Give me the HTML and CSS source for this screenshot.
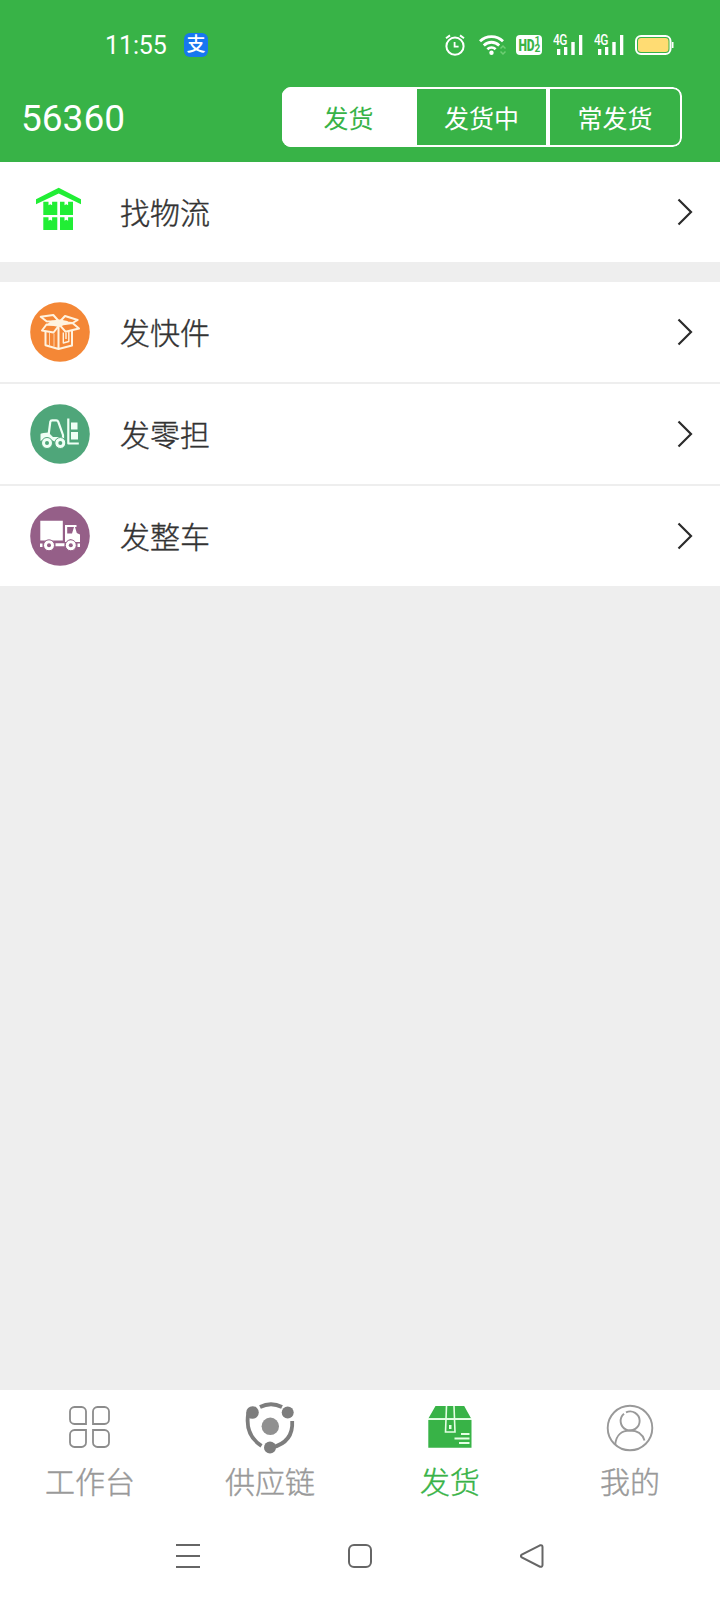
FILE: index.html
```html
<!DOCTYPE html>
<html lang="zh-CN">
<head>
  <meta charset="UTF-8" />
  <meta name="viewport" content="width=device-width, initial-scale=1.0"/>
  <title>56360</title>
  <link rel="stylesheet" href="styles.css">
</head>

<body>
  <header>
    <div class="status-bar">
      <span class="hora">11:55</span>
      <span class="alipay">支</span>
      <div class="status-icons">
        <svg class="alarm" width="20" height="22" viewBox="0 0 20 22" fill="none" stroke="#fff" stroke-width="2">
          <circle cx="10" cy="12.2" r="8.6"/>
          <path d="M9.6 8v4.6h4" stroke-width="1.8"/>
          <path d="M1 4.2l4-2.8M19 4.2l-4-2.8"/>
        </svg>
        <svg class="wifi" width="27" height="22" viewBox="0 0 27 22" fill="none" stroke="#fff" stroke-width="2.8">
          <path d="M1 7.2a16.5 16.5 0 0 1 23 0"/>
          <path d="M4.8 11.4a11 11 0 0 1 15.4 0"/>
          <path d="M8.4 15.2a6 6 0 0 1 8.2 0"/>
          <circle cx="12.5" cy="18.8" r="2.2" fill="#fff" stroke="none"/>
          <path d="M21.5 14.5l2.5-2.5 2.5 2.5M21.5 17.5l2.5 2.5 2.5-2.5" stroke="#6fce74" stroke-width="1.5"/>
        </svg>
        <div class="hd"><b>HD</b><i><em>1</em><em>2</em></i></div>
        <div class="signal">
          <span>4G</span>
          <svg width="26" height="20" viewBox="0 0 26 20" fill="#fff">
            <path d="M0 14h3.3v6H0zM7 12h3.3v8H7zM14.3 7h3.4v13h-3.4zM22 0h3.3v20H22z"/>
          </svg>
        </div>
        <div class="signal">
          <span>4G</span>
          <svg width="26" height="20" viewBox="0 0 26 20" fill="#fff">
            <path d="M0 14h3.3v6H0zM7 12h3.3v8H7zM14.3 7h3.4v13h-3.4zM22 0h3.3v20H22z"/>
          </svg>
        </div>
        <svg class="battery" width="39" height="20" viewBox="0 0 39 20">
          <rect x="1" y="1" width="34.5" height="18" rx="5" fill="none" stroke="#fff" stroke-width="2"/>
          <rect x="3" y="3" width="30.5" height="14" rx="3.2" fill="#ffdc73"/>
          <path d="M36.8 7h1.7v6h-1.7z" fill="#fff"/>
        </svg>
      </div>
    </div>
    <div class="title-bar">
      <h1>56360</h1>
      <div class="segment">
        <button class="active">发货</button>
        <button>发货中</button>
        <button>常发货</button>
      </div>
    </div>
  </header>

  <main>
    <a class="row">
      <svg class="row-icon" viewBox="0 0 60 60" fill="#21ee35">
        <path d="M28.7 5.7L51 17.3v4.9L28.7 11.4 6 22.2v-4.9z"/>
        <path d="M13.3 19.7h5.2v3.6l1.8-1 1.8 1v-3.6h5.2v13.3h-14zM30 19.7h4.500v3.600l1.800-1 1.800 1v-3.600h4.900v13.300H30z"/>
        <path d="M13.300 35.200h5.200v3.600l1.800-1 1.800 1v-3.600h5.200V48h-14zM30 35.200h4.500v3.600l1.800-1 1.800 1v-3.600h4.900V48H30z"/>
      </svg>
      <span>找物流</span>
      <svg class="arrow" viewBox="0 0 16 28"><path d="M1.5 1.5L14 14 1.5 26.5"/></svg>
    </a>

    <div class="group">
      <a class="row">
        <svg class="row-icon" viewBox="0 0 60 60" fill="none" stroke="#fff3df" stroke-width="2" stroke-linejoin="round">
          <circle cx="30" cy="30" r="29.8" fill="#f48736" stroke="none"/>
          <path d="M10.7 14.8l12.6-1.8 6.2 7-13-.8z"/>
          <path d="M29.5 20l5.5-6 12.7 4-5.2 3z"/>
          <path d="M16.5 22.5L12 28.5l11.5 2 6-7.7z"/>
          <path d="M29.5 22.8l13-1.8 6.5 5.5-13.5 3.2z"/>
          <path d="M22 19.5l8-1 7 1.5-8 4-10-2z" fill="#fff3df"/>
          <path d="M15.5 29.5v13.700l13 3.800 13.500-3.500V28.500M28.500 25v22"/>
          <path d="M19.500 31v12.500M24 31.500V44.500" stroke-width="1" opacity=".7"/>
          <path d="M33.300 30.500v10.500l5.500-1.500V29.500M36 31v6" stroke-width="1.400"/>
        </svg>
        <span>发快件</span>
        <svg class="arrow" viewBox="0 0 16 28"><path d="M1.5 1.5L14 14 1.5 26.5"/></svg>
      </a>
      <a class="row">
        <svg class="row-icon" viewBox="0 0 60 60" fill="none" stroke="#effff5" stroke-width="2.2" stroke-linejoin="round">
          <circle cx="30" cy="30" r="29.8" fill="#4fa67a" stroke="none"/>
          <path d="M18.7 30l1.6-12.200q.3-1.500 1.800-1.500h4.200q1.400 0 2 1.500L33 31v4"/>
          <path d="M10.500 37v-6.500q0-1.500 3-1.500l5-.5 4.500 4.500h11V39h-6l-11-5z" fill="#effff5" stroke="none"/>
          <circle cx="17" cy="39" r="5.5" fill="#effff5" stroke="#4fa67a" stroke-width="1"/>
          <circle cx="30.3" cy="39" r="5.5" fill="#effff5" stroke="#4fa67a" stroke-width="1"/>
          <circle cx="17" cy="39" r="2" fill="#4fa67a" stroke="none"/>
          <circle cx="30.3" cy="39" r="2" fill="#4fa67a" stroke="none"/>
          <path d="M38.3 14.5v25h10.5"/>
          <path d="M41 18.5h6.5v7H41zM41 28h7v7.5h-7z" fill="#effff5" stroke="none"/>
        </svg>
        <span>发零担</span>
        <svg class="arrow" viewBox="0 0 16 28"><path d="M1.5 1.5L14 14 1.5 26.5"/></svg>
      </a>
      <a class="row">
        <svg class="row-icon" viewBox="0 0 60 60" fill="#fff">
          <circle cx="30" cy="30" r="29.8" fill="#955f88"/>
          <path d="M10.3 14.7h22.5V34.5H10.3zM10 37.5h2.5v3.5H10zM25.5 37.3h9v3h-9zM47.5 37.5H50V41h-2.5z"/>
          <path d="M35 19h11.500v2H45l1.800 6 3.200 1.500V36h-5L40.500 33l-4 3H35zM37.200 21v6.500h4.800L44 21z" fill-rule="evenodd"/>
          <circle cx="19" cy="39.3" r="5.5" stroke="#955f88"/>
          <circle cx="40.8" cy="39.3" r="5.5" stroke="#955f88"/>
          <circle cx="19" cy="39.3" r="2" fill="#955f88"/>
          <circle cx="40.8" cy="39.3" r="2" fill="#955f88"/>
        </svg>
        <span>发整车</span>
        <svg class="arrow" viewBox="0 0 16 28"><path d="M1.5 1.5L14 14 1.5 26.5"/></svg>
      </a>
    </div>
  </main>

  <nav class="tab-bar">
    <a class="tab">
      <svg viewBox="0 0 60 60" fill="none" stroke="#8c8c8c" stroke-width="1.8">
        <path d="M26 27H14.5a4.5 4.5 0 0 1-4.5-4.5v-8a4.5 4.5 0 0 1 4.5-4.5h7a4.5 4.5 0 0 1 4.5 4.5z"/>
        <path d="M33 27V14.5a4.5 4.5 0 0 1 4.5-4.5h7a4.5 4.5 0 0 1 4.5 4.5v8a4.5 4.5 0 0 1-4.5 4.5z"/>
        <path d="M26 33v12.5a4.5 4.5 0 0 1-4.5 4.5h-7a4.5 4.5 0 0 1-4.5-4.5v-8a4.5 4.5 0 0 1 4.5-4.5z"/>
        <path d="M33 33h11.5a4.5 4.5 0 0 1 4.5 4.5v8a4.5 4.5 0 0 1-4.5 4.5h-7a4.5 4.5 0 0 1-4.5-4.5z"/>
      </svg>
      <span>工作台</span>
    </a>
    <a class="tab">
      <svg viewBox="0 0 60 60" fill="none" stroke="#7d7d7d" stroke-width="3.8">
        <path d="M20 10Q31 4.5 42 10"/>
        <path d="M52.2 24Q53.5 45 32 50.5"/>
        <path d="M21.5 48.8Q4.5 38 8.3 16"/>
        <g fill="#7d7d7d" stroke="none">
          <circle cx="12.5" cy="15.5" r="6.3"/>
          <circle cx="47.7" cy="15.5" r="6"/>
          <circle cx="30" cy="50.5" r="6"/>
        </g>
        <circle cx="30.3" cy="29.3" r="8.7" fill="#909090" stroke="none"/>
      </svg>
      <span>供应链</span>
    </a>
    <a class="tab active">
      <svg viewBox="0 0 60 60" fill="#38b347">
        <path d="M15.5 9h28.7l6.8 12.3H8.5zM8.3 23h43.2v27.7H8.3z"/>
        <path d="M26.5 9l-1 26h9.5l-1-26" fill="none" stroke="#e4ffe4" stroke-width="1.6"/>
        <path d="M29 28h2.5v4H29zM41 36h8.5v2H41zM34.5 40.5h15v2h-15zM39 45h10.5v2H39zM8.3 21.2h43.2V23H8.3z" fill="#e4ffe4"/>
      </svg>
      <span>发货</span>
    </a>
    <a class="tab">
      <svg viewBox="0 0 60 60" fill="none" stroke="#999" stroke-width="1.9">
        <circle cx="30" cy="31" r="22.3"/>
        <path d="M24 16.700a9.500 9.500 0 1 0 2-1.300"/>
        <path d="M15.300 47.500C16 38 22 33.500 30 33.500c7 0 12.500 3.500 14.500 10"/>
      </svg>
      <span>我的</span>
    </a>
  </nav>

  <div class="system-nav">
    <svg viewBox="0 0 24 24"><path d="M0 1h24M0 12h24M0 23h24"/></svg>
    <svg viewBox="0 0 24 24"><rect x="1" y="1" width="22" height="22" rx="5"/></svg>
    <svg viewBox="0 0 24 24"><path d="M20 1.3L1.8 10.5q-1.8 1.5 0 3L20 22.7q2.2.6 2.5-1.5V2.8q-.3-2.1-2.5-1.5z"/></svg>
  </div>
</body>
</html>
```

FILE: styles.css
```css
* {
  box-sizing: border-box;
}
body {
  margin: 0;
  height: 1600px;
  display: flex;
  flex-direction: column;
  font-family: Roboto, 'Noto Sans CJK SC', sans-serif;
  background-color: #eee;
  color: #333;
}
header {
  height: 162px;
  background-color: #38b347;
  color: white;
}
.status-bar {
  height: 87px;
  padding: 3px 46px 0 105px;
  display: flex;
  align-items: center;
}
.hora {
  width: 79px;
  font-size: 25px;
  letter-spacing: -0.1px;
}
.alipay {
  width: 24px;
  height: 24px;
  border-radius: 6px;
  background: #1777f0;
  font-size: 19px;
  font-weight: 500;
  line-height: 23px;
  text-align: center;
}
.status-icons {
  flex: 1;
  display: flex;
  align-items: center;
  justify-content: flex-end;
}
.wifi {
  margin-left: 14px;
}
.hd {
  width: 26px;
  height: 20px;
  margin-left: 10px;
  border-radius: 4px;
  background: white;
  color: #38b347;
  display: flex;
  align-items: center;
  justify-content: center;
}
.hd b {
  margin: 0 -2px;
  font-size: 16px;
  font-weight: 900;
  letter-spacing: -0.5px;
  transform: scaleX(0.75);
}
.hd i {
  display: grid;
  font-size: 10px;
  font-weight: bold;
  line-height: 8px;
}
.hd em {
  font-style: normal;
}
.signal {
  position: relative;
  width: 30px;
  height: 20px;
  margin-left: 11px;
  display: flex;
  justify-content: flex-end;
}
.hd + .signal {
  margin-left: 11px;
}
.signal span {
  position: absolute;
  left: 0;
  top: -2px;
  font-size: 14px;
  font-weight: 500;
  line-height: 14px;
  letter-spacing: -0.5px;
  transform: scaleX(0.85);
  transform-origin: left;
}
.battery {
  margin-left: 11px;
}
.title-bar {
  height: 60px;
  padding: 0 38px 0 21px;
  display: flex;
  align-items: center;
  justify-content: space-between;
}
h1 {
  margin: 0;
  padding-top: 2px;
  font-size: 37px;
  font-weight: normal;
}
.segment {
  width: 400px;
  height: 60px;
  display: grid;
  grid-template-columns: 133px 133px 134px;
  border-radius: 9px;
  overflow: hidden;
}
.segment button {
  padding: 0;
  border: 2px solid white;
  background: none;
  color: white;
  font-family: inherit;
  font-size: 25px;
}
.segment button:last-child {
  border-radius: 0 9px 9px 0;
}
.segment .active {
  background: white;
  color: #38b347;
}
main {
  flex: 1;
}
.group {
  margin-top: 20px;
}
.row {
  height: 100px;
  padding: 0 27px 0 30px;
  background: white;
  display: flex;
  align-items: center;
}
.group .row + .row {
  height: 102px;
  border-top: 2px solid #eee;
}
.row span {
  flex: 1;
  margin-left: 30px;
  padding-bottom: 2px;
  font-size: 30px;
  font-weight: 300;
  -webkit-text-stroke: 0.4px;
}
.row-icon {
  width: 60px;
  height: 60px;
}
.arrow {
  width: 16px;
  height: 28px;
  fill: none;
  stroke: #2b2b2b;
  stroke-width: 2.2;
}
.tab-bar {
  height: 122px;
  padding-top: 7px;
  background: white;
  display: grid;
  grid-template-columns: repeat(4, 1fr);
}
.tab {
  display: flex;
  flex-direction: column;
  align-items: center;
  color: #999;
  font-size: 30px;
  font-weight: 300;
  line-height: 44px;
  -webkit-text-stroke: 0.4px;
}
.tab svg {
  width: 60px;
  height: 60px;
  margin-bottom: 4px;
}
.tab.active {
  color: #38b347;
}
.system-nav {
  height: 88px;
  background: white;
  display: flex;
  align-items: center;
  justify-content: center;
  gap: 148px;
}
.system-nav svg {
  width: 24px;
  height: 24px;
  fill: none;
  stroke: #666;
  stroke-width: 2;
}
```
